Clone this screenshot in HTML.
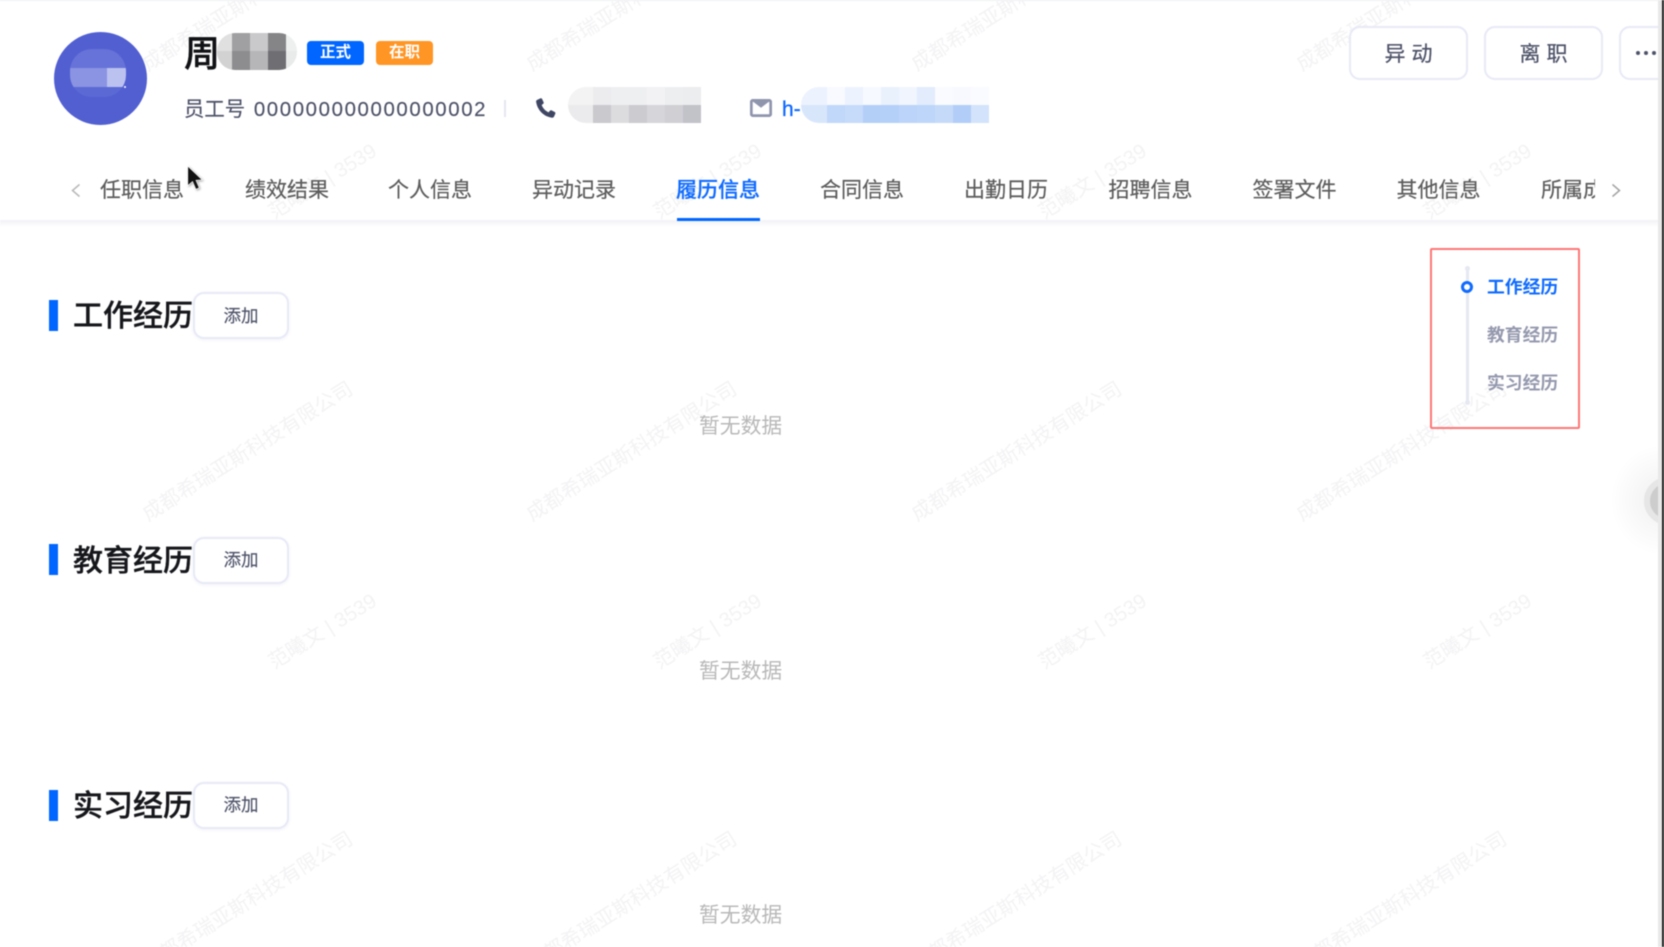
<!DOCTYPE html>
<html lang="zh-CN">
<head>
<meta charset="utf-8">
<title>履历信息</title>
<style>
html,body{margin:0;padding:0;width:1664px;height:947px;overflow:hidden;background:#fff}
body{font-family:"Liberation Sans","Noto Sans CJK SC",sans-serif;position:relative}
#root{position:absolute;left:0;top:0;width:1664px;height:947px;overflow:hidden;background:#fff;filter:blur(.55px)}
.a{position:absolute;white-space:nowrap;line-height:1}
.wm{position:absolute;white-space:nowrap;line-height:1;font-size:20.3px;color:#f3f3f5;transform:translate(-50%,-50%) rotate(-32deg)}
.mos{position:absolute;display:flex;flex-wrap:wrap;overflow:hidden}
.mos i{display:block;height:18px;width:18px;flex:none}
.tab{position:absolute;top:180px;font-size:21px;line-height:22px;color:#5c5c5c;white-space:nowrap;-webkit-text-stroke:.2px #5c5c5c}
.btn{position:absolute;box-sizing:border-box;background:#fff;border:2px solid #e7e9f6;border-radius:11px;color:#4e5369;text-align:center}
.bar{position:absolute;left:49px;width:9px;height:31px;background:#0066ff}
.ttl{position:absolute;left:73px;font-size:30px;line-height:32px;font-weight:500;color:#16171b;white-space:nowrap;-webkit-text-stroke:.35px #16171b}
.add{left:193px;width:96px;height:47px;font-size:17.5px;line-height:43px;box-shadow:0 1px 3px rgba(80,90,160,.08);-webkit-text-stroke:.15px #4e5369}
.big{font-size:21px;line-height:53px;letter-spacing:6px;text-indent:6px;-webkit-text-stroke:.25px #4e5369}
.empty{position:absolute;left:699px;font-size:20.8px;line-height:22px;color:#b8b8b8;white-space:nowrap}
.nav{position:absolute;left:1487px;font-size:17.8px;line-height:20px;font-weight:700;color:#9599ae;white-space:nowrap}
</style>
</head>
<body>
<div id="root">

<!-- watermarks -->
<span class="wm" style="left:248px;top:2px">成都希瑞亚斯科技有限公司</span>
<span class="wm" style="left:632px;top:2px">成都希瑞亚斯科技有限公司</span>
<span class="wm" style="left:1017px;top:2px">成都希瑞亚斯科技有限公司</span>
<span class="wm" style="left:1402px;top:2px">成都希瑞亚斯科技有限公司</span>
<span class="wm" style="left:248px;top:452px">成都希瑞亚斯科技有限公司</span>
<span class="wm" style="left:632px;top:452px">成都希瑞亚斯科技有限公司</span>
<span class="wm" style="left:1017px;top:452px">成都希瑞亚斯科技有限公司</span>
<span class="wm" style="left:1402px;top:452px">成都希瑞亚斯科技有限公司</span>
<span class="wm" style="left:248px;top:902px">成都希瑞亚斯科技有限公司</span>
<span class="wm" style="left:632px;top:902px">成都希瑞亚斯科技有限公司</span>
<span class="wm" style="left:1017px;top:902px">成都希瑞亚斯科技有限公司</span>
<span class="wm" style="left:1402px;top:902px">成都希瑞亚斯科技有限公司</span>
<span class="wm" style="left:323px;top:182px">范曦文 | 3539</span>
<span class="wm" style="left:708px;top:182px">范曦文 | 3539</span>
<span class="wm" style="left:1093px;top:182px">范曦文 | 3539</span>
<span class="wm" style="left:1478px;top:182px">范曦文 | 3539</span>
<span class="wm" style="left:323px;top:632px">范曦文 | 3539</span>
<span class="wm" style="left:708px;top:632px">范曦文 | 3539</span>
<span class="wm" style="left:1093px;top:632px">范曦文 | 3539</span>
<span class="wm" style="left:1478px;top:632px">范曦文 | 3539</span>

<!-- top hairline -->
<div style="position:absolute;left:0;top:0;width:1658px;height:1px;background:#eeeff2"></div>

<!-- avatar -->
<div style="position:absolute;left:53.500px;top:32px;width:93px;height:93px;border-radius:50%;background:#515fd1;overflow:hidden">
  <div style="position:absolute;left:16px;top:17px;width:56px;height:48px;border-radius:22px;overflow:hidden;background:#6773d8">
    <div style="position:absolute;left:0;top:19px;width:37px;height:19px;background:#8a94e2"></div>
    <div style="position:absolute;left:37px;top:19px;width:19px;height:19px;background:#bcc2f0"></div>
    <div style="position:absolute;left:0;top:38px;width:56px;height:10px;background:#5b69d4"></div>
  </div>
  <div style="position:absolute;left:70px;top:54px;width:2px;height:2px;background:#fff;border-radius:50%"></div>
</div>

<!-- name -->
<div class="a" style="left:184px;top:35px;font-size:36px;line-height:38px;font-weight:500;color:#111215;-webkit-text-stroke:.4px #111215">周</div>
<div style="position:absolute;left:217px;top:33px;width:80px;height:37px;border-radius:18px;overflow:hidden;display:grid;grid-template-columns:15px 18px 18px 18px 11px;grid-template-rows:18px 19px">
  <i style="background:#e0e0e0"></i><i style="background:#a0a0a2"></i><i style="background:#c9c9cb"></i><i style="background:#858588"></i><i style="background:#eef0f0"></i>
  <i style="background:#d2d2d3"></i><i style="background:#8d8d90"></i><i style="background:#b6b6b8"></i><i style="background:#6f6f73"></i><i style="background:#e9ebeb"></i>
</div>

<!-- tags -->
<div class="a" style="left:307px;top:41px;width:57px;height:24px;background:#0066ff;border-radius:4px;color:#fff;font-size:15.500px;line-height:24px;text-align:center;font-weight:700">正式</div>
<div class="a" style="left:376px;top:41px;width:57px;height:24px;background:#ff9524;border-radius:4px;color:#fff;font-size:15.500px;line-height:24px;text-align:center;font-weight:700">在职</div>

<!-- meta row -->
<div class="a" style="left:184px;top:98px;font-size:20.400px;line-height:24px;color:#4d5268;-webkit-text-stroke:.15px #4d5268">员工号 <span style="letter-spacing:1.620px;margin-left:3px">000000000000000002</span></div>
<div style="position:absolute;left:504px;top:100px;width:1.500px;height:17px;background:#e4e6f0"></div>

<svg style="position:absolute;left:535px;top:97px" width="22" height="22" viewBox="0 0 22 22">
  <path d="M2.200 2.900 5.400 1.400c.7-.3 1.400 0 1.700.6l1.500 3.200c.3.6.1 1.200-.4 1.600L6.700 8c.9 2.900 3.700 6 6.900 7.400l1.300-1.600c.4-.5 1.100-.7 1.700-.4l3.100 1.600c.6.3.9 1 .6 1.700l-1.300 2.900c-.4.8-1.200 1.200-2.100 1.100C8.900 19.800 2.300 13.100 1.100 4.800 1 4 1.400 3.300 2.200 2.900Z" fill="#3f4663"/>
</svg>

<div class="mos" style="left:568px;top:87px;width:133px;height:36px;border-radius:18px 0 0 18px">
  <i style="background:#f3f3f4;width:25px"></i><i style="background:#ececef"></i><i style="background:#eeeff1"></i><i style="background:#eeeff1"></i><i style="background:#f2f2f4"></i><i style="background:#edeef0"></i><i style="background:#ecedef"></i>
  <i style="background:#ebebed;width:25px"></i><i style="background:#c9c9ce"></i><i style="background:#dcdcdf"></i><i style="background:#cbcbd0"></i><i style="background:#d6d6da"></i><i style="background:#cfcfd4"></i><i style="background:#c2c2c9"></i>
</div>

<svg style="position:absolute;left:750px;top:99px" width="22" height="18" viewBox="0 0 22 18">
  <rect x="1.300" y="1.300" width="19.400" height="15.400" rx="1.800" fill="#fff" stroke="#9095ae" stroke-width="2.800"/>
  <path d="M1.500 1.500H20.500L11 8.800Z" fill="#9095ae"/>
</svg>

<div class="a" style="left:782px;top:98px;font-size:21px;line-height:24px;font-weight:500;color:#0f69ff;-webkit-text-stroke:.3px #0f69ff">h-</div>
<div class="mos" style="left:801px;top:87px;width:188px;height:36px;border-radius:18px 0 0 18px">
  <i style="background:#ecf3fe;width:26px"></i><i style="background:#f8faff"></i><i style="background:#ecf3fe"></i><i style="background:#f6f9ff"></i><i style="background:#e9f1fd"></i><i style="background:#f0f5fe"></i><i style="background:#e2ecfc"></i><i style="background:#f9fbff"></i><i style="background:#f7f9ff"></i><i style="background:#fafbff"></i>
  <i style="background:#d8e6fc;width:26px"></i><i style="background:#c2d8fa"></i><i style="background:#c6dbfa"></i><i style="background:#b3cff8"></i><i style="background:#b5d0f8"></i><i style="background:#bcd4f9"></i><i style="background:#bed6f9"></i><i style="background:#c5daf9"></i><i style="background:#b2cef8"></i><i style="background:#d3e3fb"></i>
</div>

<!-- action buttons -->
<div class="btn big" style="left:1349px;top:26px;width:119px;height:54px">异动</div>
<div class="btn big" style="left:1484px;top:26px;width:119px;height:54px">离职</div>
<div class="btn" style="left:1619px;top:26px;width:60px;height:54px"></div>
<div style="position:absolute;left:1636px;top:51px;width:4px;height:4px;border-radius:50%;background:#4e5369"></div>
<div style="position:absolute;left:1644px;top:51px;width:4px;height:4px;border-radius:50%;background:#4e5369"></div>
<div style="position:absolute;left:1652px;top:51px;width:4px;height:4px;border-radius:50%;background:#4e5369"></div>

<!-- tabs -->
<svg style="position:absolute;left:70px;top:183px" width="12" height="15" viewBox="0 0 12 15"><path d="M9.500 1.500 2.500 7.500l7 6" fill="none" stroke="#b8b8b8" stroke-width="1.500"/></svg>
<div class="tab" style="left:100px">任职信息</div>
<div class="tab" style="left:245px">绩效结果</div>
<div class="tab" style="left:388px">个人信息</div>
<div class="tab" style="left:532px">异动记录</div>
<div class="tab" style="left:676px;color:#0f6bff;font-weight:500;-webkit-text-stroke:.2px #0f6bff">履历信息</div>
<div class="tab" style="left:820px">合同信息</div>
<div class="tab" style="left:964px">出勤日历</div>
<div class="tab" style="left:1108.500px">招聘信息</div>
<div class="tab" style="left:1252.500px">签署文件</div>
<div class="tab" style="left:1396.500px">其他信息</div>
<div style="position:absolute;left:1541px;top:175px;width:54px;height:30px;overflow:hidden"><div class="tab" style="left:0;top:5px">所属成员</div></div>
<svg style="position:absolute;left:1610px;top:183px" width="12" height="15" viewBox="0 0 12 15"><path d="M2.500 1.500 9.500 7.500l-7 6" fill="none" stroke="#a4a4a4" stroke-width="1.500"/></svg>

<div style="position:absolute;left:0;top:220px;width:1658px;height:7px;background:linear-gradient(#f1f2f6,#fff)"></div>
<div style="position:absolute;left:677px;top:218px;width:83px;height:3px;background:#0066ff"></div>

<!-- sections -->
<div class="bar" style="top:300px"></div>
<div class="ttl" style="top:301px">工作经历</div>
<div class="btn add" style="top:292px;line-height:45px">添加</div>
<div class="empty" style="top:416px">暂无数据</div>

<div class="bar" style="top:544px"></div>
<div class="ttl" style="top:546px">教育经历</div>
<div class="btn add" style="top:537px">添加</div>
<div class="empty" style="top:661px">暂无数据</div>

<div class="bar" style="top:790px"></div>
<div class="ttl" style="top:791px">实习经历</div>
<div class="btn add" style="top:782px">添加</div>
<div class="empty" style="top:905px">暂无数据</div>

<!-- anchor nav -->
<div style="position:absolute;left:1430px;top:248px;width:150px;height:181px;box-sizing:border-box;border:2px solid #ff7575;border-radius:2px"></div>
<div style="position:absolute;left:1465.500px;top:267px;width:3px;height:137px;background:#e6e8f2"></div>
<div style="position:absolute;left:1464.500px;top:266px;width:5px;height:5px;border-radius:50%;background:#e6e8f2"></div>
<div style="position:absolute;left:1464.500px;top:400px;width:5px;height:5px;border-radius:50%;background:#e6e8f2"></div>
<div style="position:absolute;left:1461px;top:281px;width:12px;height:12px;box-sizing:border-box;border:3.500px solid #0f6bff;border-radius:50%;background:#fff"></div>
<div class="nav" style="top:277px;color:#0f6bff">工作经历</div>
<div class="nav" style="top:325px">教育经历</div>
<div class="nav" style="top:373px">实习经历</div>

<!-- floating handle clipped on the right edge -->
<div style="position:absolute;left:1610px;top:445px;width:100px;height:110px;background:radial-gradient(closest-side,rgba(0,0,0,.06),rgba(0,0,0,0))"></div>
<div style="position:absolute;left:1644px;top:477px;width:48px;height:48px;box-sizing:border-box;border-radius:50%;background:#cdcdcd;border:6px solid #e6e6e6"></div>

<!-- window edge -->
<div style="position:absolute;left:1658px;top:0;width:4px;height:947px;background:#e8e8e8"></div>
<div style="position:absolute;left:1662px;top:0;width:2px;height:947px;background:#1c1c1c"></div>

<!-- cursor -->
<svg style="position:absolute;left:186px;top:165px;filter:drop-shadow(1px 1px 1px rgba(0,0,0,.35))" width="18" height="29" viewBox="0 0 16 26">
  <path d="M1.500 1 1.500 18.500 5.800 14.800 8.800 21.800 11.800 20.500 8.900 13.700 14.500 13.300Z" fill="#111" stroke="#fff" stroke-width=".6"/>
</svg>

</div>
</body>
</html>
